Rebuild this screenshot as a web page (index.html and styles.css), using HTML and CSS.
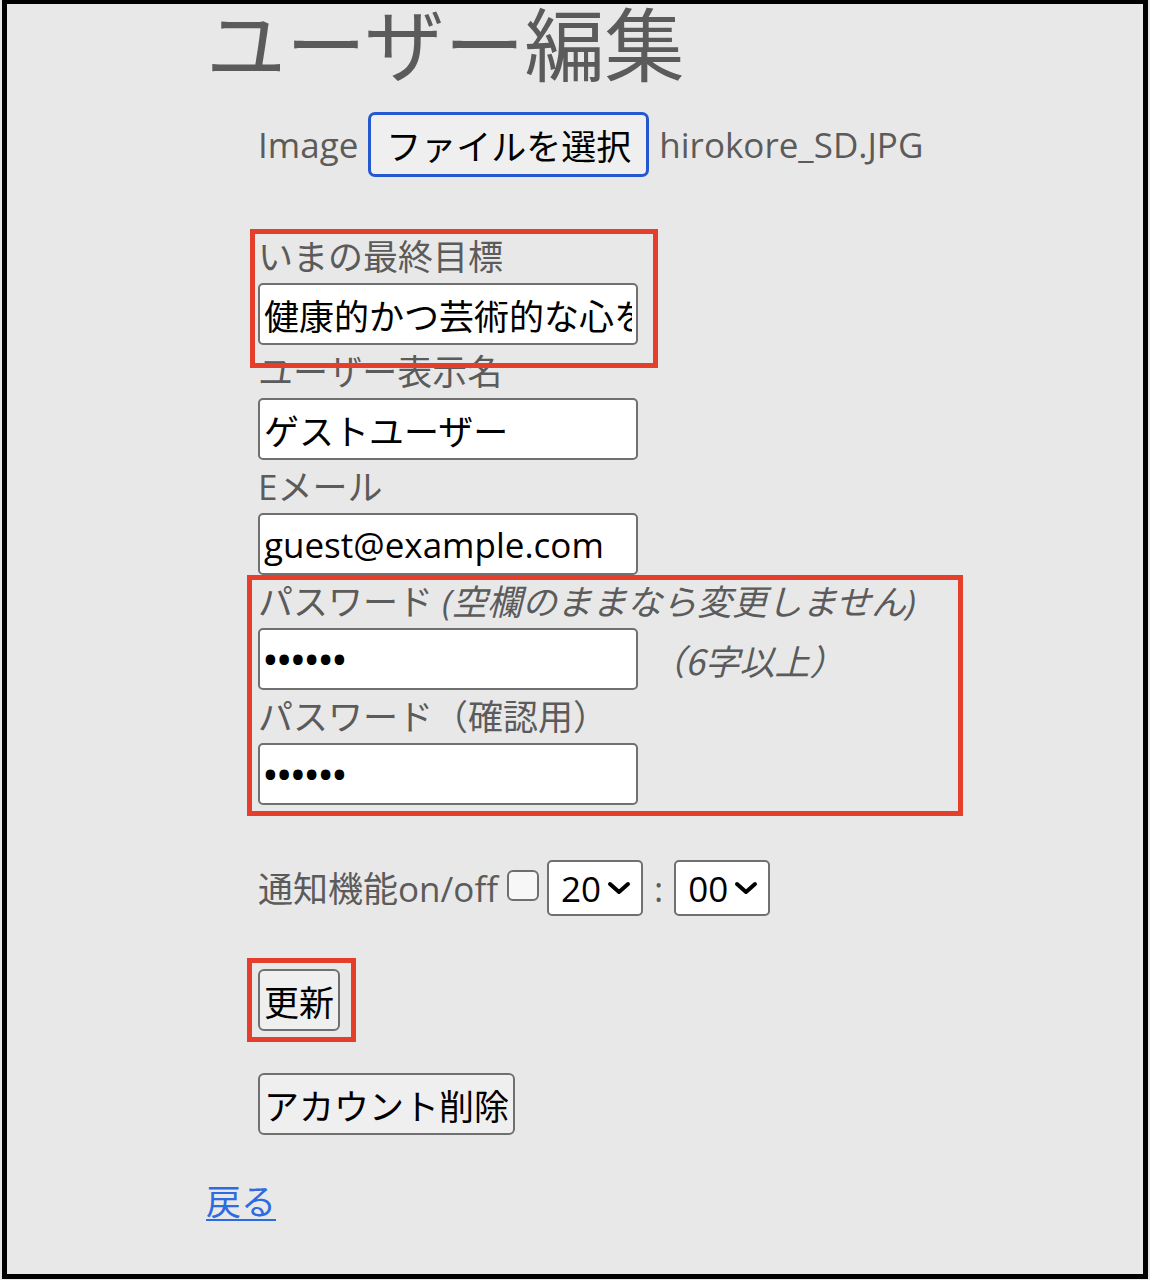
FILE: index.html
```html
<!DOCTYPE html>
<html lang="ja">
<head>
<meta charset="utf-8">
<title>ユーザー編集</title>
<link rel="stylesheet" href="styles.css">
</head>
<body>
<div class="frame">
  <h1 class="title">ユーザー編集</h1>
  <form class="form">
    <div class="image-row">
      <label class="image-label">Image</label>
      <button type="button" class="file-btn">ファイルを選択</button>
      <span class="file-name">hirokore_SD.JPG</span>
    </div>

    <div class="fields">
      <div class="field">
        <label class="label">いまの最終目標</label>
        <input class="input" type="text" value="健康的かつ芸術的な心を持つこと">
      </div>
      <div class="field">
        <label class="label">ユーザー表示名</label>
        <input class="input" type="text" value="ゲストユーザー">
      </div>
      <div class="field">
        <label class="label">Eメール</label>
        <input class="input" type="email" value="guest@example.com">
      </div>
      <div class="field">
        <label class="label">パスワード <i class="note">(空欄のままなら変更しません)</i></label>
        <div class="input-line">
          <input class="input" type="password" value="aaaaaa">
          <i class="hint">（6字以上）</i>
        </div>
      </div>
      <div class="field">
        <label class="label">パスワード（確認用）</label>
        <input class="input" type="password" value="aaaaaa">
      </div>
    </div>

    <div class="notify">
      <span class="notify-label">通知機能on/off</span>
      <input class="check" type="checkbox">
      <span class="select"><span class="select-text">20</span><svg class="chev" width="24" height="14" viewBox="0 0 24 14"><path d="M3 3 L12 11 L21 3" fill="none" stroke="#000" stroke-width="4" stroke-linecap="round" stroke-linejoin="round"/></svg></span>
      <span class="colon">:</span>
      <span class="select"><span class="select-text">00</span><svg class="chev" width="24" height="14" viewBox="0 0 24 14"><path d="M3 3 L12 11 L21 3" fill="none" stroke="#000" stroke-width="4" stroke-linecap="round" stroke-linejoin="round"/></svg></span>
    </div>

    <div class="actions">
      <button type="submit" class="btn">更新</button>
      <button type="button" class="btn">アカウント削除</button>
    </div>
  </form>
  <a class="back" href="#">戻る</a>

  <div class="mark mark-goal"></div>
  <div class="mark mark-pass"></div>
  <div class="mark mark-update"></div>
</div>
</body>
</html>
```

FILE: styles.css
```css
html, body {
  margin: 0;
  padding: 0;
  background: #e8e8e8;
}

.frame {
  position: relative;
  box-sizing: border-box;
  width: 1146px;
  height: 1279px;
  margin-left: 2px;
  border: 5px solid #000;
  border-top-width: 4px;
  background: #e8e8e8;
  padding-left: 199px;
  font-family: "Open Sans", "Noto Sans CJK JP", sans-serif;
  color: #5b5b5b;
}

.title {
  margin: -4px 0 0 0;
  font-family: "Noto Sans CJK JP", sans-serif;
  font-size: 80px;
  font-weight: 400;
  line-height: 80px;
  color: #5b5b5b;
}

.form {
  margin-left: 52px;
}

.image-row {
  display: flex;
  align-items: center;
  gap: 10px;
  margin-top: 32px;
  height: 65px;
  font-size: 35px;
}

.image-label {
  line-height: 1;
}

.file-btn {
  box-sizing: border-box;
  height: 65px;
  width: 281px;
  padding: 0;
  border: 3px solid #2458d0;
  border-radius: 7px;
  background: #efefef;
  color: #000;
  font-family: "Noto Sans CJK JP", sans-serif;
  font-size: 35px;
  line-height: 1;
}

.file-name {
  line-height: 1;
}

.fields {
  margin-top: 53px;
  display: flex;
  flex-direction: column;
}

.field {
  display: flex;
  flex-direction: column;
  align-items: flex-start;
}

.label {
  display: block;
  font-size: 35px;
  line-height: 53px;
  height: 53px;
  white-space: nowrap;
}

.note {
  font-style: italic;
}

.input {
  box-sizing: border-box;
  width: 380px;
  height: 62px;
  margin: 0;
  padding: 0 4px;
  border: 2px solid #707070;
  border-radius: 5px;
  background: #fff;
  color: #000;
  font-family: "Open Sans", "Noto Sans CJK JP", sans-serif;
  font-size: 35px;
  outline: none;
}

.input[type="password"] {
  font-size: 34px;
  font-weight: 700;
  letter-spacing: 1px;
}

.input-line {
  display: flex;
  align-items: center;
  gap: 12px;
}

.hint {
  font-family: "Noto Sans CJK JP", sans-serif;
  font-size: 35px;
  font-style: italic;
  color: #5b5b5b;
}

.notify {
  display: flex;
  align-items: center;
  margin-top: 55px;
  height: 56px;
  font-size: 35px;
}

.notify-label {
  line-height: 1;
  margin-right: 9px;
}

.check {
  appearance: none;
  -webkit-appearance: none;
  box-sizing: border-box;
  width: 32px;
  height: 31px;
  margin: 0 8px 6px 0;
  border: 2px solid #6e6e6e;
  border-radius: 6px;
  background: #f7f7f7;
}

.select {
  box-sizing: border-box;
  display: inline-flex;
  align-items: center;
  justify-content: space-between;
  width: 96px;
  height: 56px;
  padding: 0 10px 0 12px;
  border: 2px solid #707070;
  border-radius: 5px;
  background: #fff;
  color: #000;
  font-size: 35px;
}

.select-text {
  line-height: 1;
}

.chev {
  display: block;
}

.colon {
  margin: 0 11px;
  color: #5b5b5b;
  line-height: 1;
}

.actions {
  display: flex;
  flex-direction: column;
  align-items: flex-start;
  gap: 42px;
  margin-top: 53px;
}

.btn {
  box-sizing: border-box;
  height: 62px;
  padding: 0 4px;
  border: 2px solid #707070;
  border-radius: 6px;
  background: #efefef;
  color: #000;
  font-family: "Noto Sans CJK JP", sans-serif;
  font-size: 35px;
  line-height: 1;
}

.back {
  display: inline-block;
  margin-top: 38px;
  font-family: "Noto Sans CJK JP", sans-serif;
  font-size: 35px;
  line-height: 53px;
  color: #2f6be0;
  text-decoration: underline;
  text-decoration-thickness: 2px;
  text-underline-offset: 4px;
}

.mark {
  position: absolute;
  box-sizing: border-box;
  border: 5px solid #e63e2c;
}

.mark-goal {
  left: 243px;
  top: 225px;
  width: 408px;
  height: 139px;
}

.mark-pass {
  left: 240px;
  top: 571px;
  width: 716px;
  height: 241px;
}

.mark-update {
  left: 240px;
  top: 954px;
  width: 109px;
  height: 84px;
}
```
